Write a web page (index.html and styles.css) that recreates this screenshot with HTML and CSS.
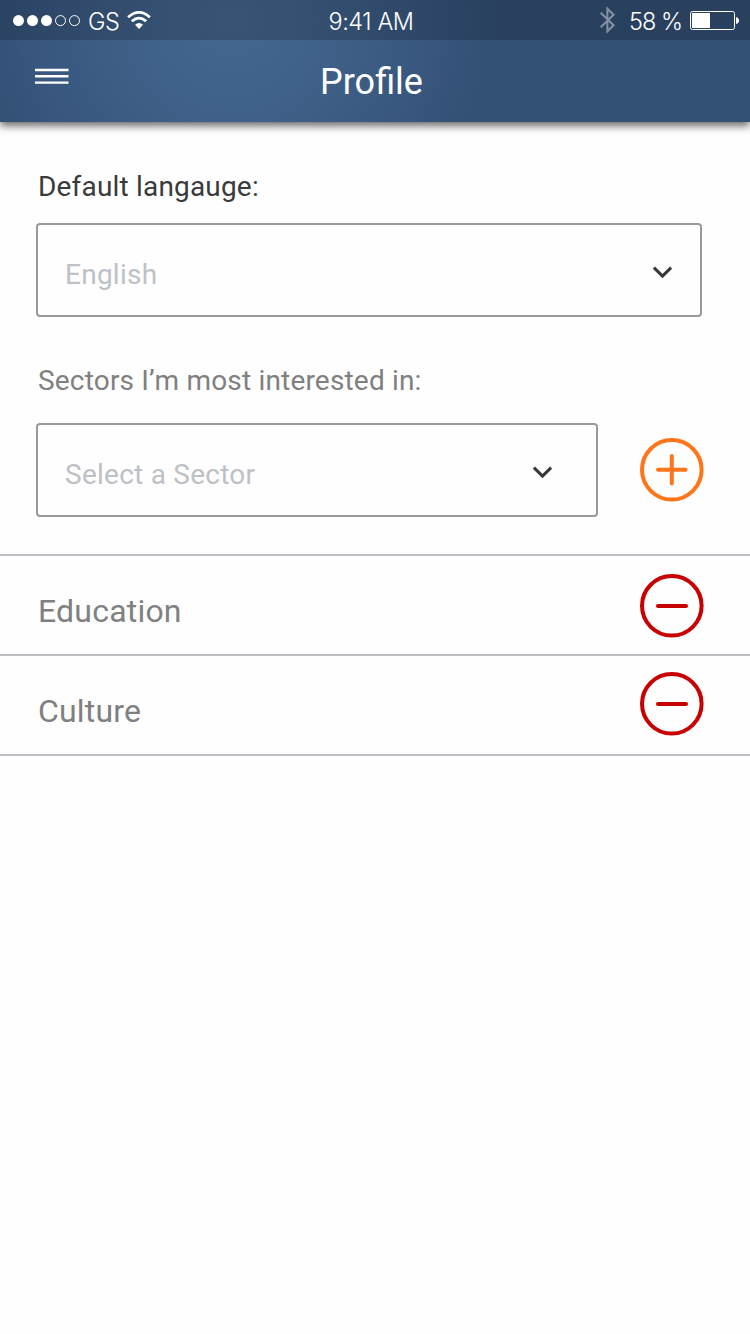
FILE: index.html
```html
<!DOCTYPE html>
<html lang="en">
<head>
<meta charset="utf-8">
<title>Profile</title>
<link rel="stylesheet" href="styles.css">
</head>
<body>
<header class="header">
  <div class="status">
    <div class="status-left">
      <svg class="signal" width="68" height="12" viewBox="0 0 68 12"><g fill="#fff"><circle cx="5.5" cy="5.6" r="5.5"/><circle cx="19.5" cy="5.6" r="5.5"/><circle cx="33.5" cy="5.6" r="5.5"/></g><g fill="none" stroke="#fff"><circle cx="47.5" cy="5.6" r="5"/><circle cx="61.5" cy="5.6" r="5"/></g></svg>
      <span class="carrier">GS</span>
      <svg class="wifi" width="24" height="18" viewBox="0 0 24 18"><g fill="none" stroke="#fff" stroke-width="2.8"><path d="M1.1 6.2Q12-3.4 22.9 6.2"/><path d="M4.8 10.2Q12 4 19.2 10.2"/></g><path d="M8 13.8Q12 10.2 16 13.8L12 18Z" fill="#fff"/></svg>
    </div>
    <span class="time">9:41 AM</span>
    <div class="status-right">
      <svg class="bluetooth" width="15" height="26" viewBox="0 0 15 26"><path d="M.7 5.7L13.6 18.2 7.4 24.3V1.7L13.6 7.8.7 20.3" fill="none" stroke="#8492a7" stroke-width="2"/></svg>
      <span class="percent">58 %</span>
      <svg class="battery" width="49" height="19" viewBox="0 0 49 19"><rect x=".5" y=".5" width="44" height="18" rx="2" fill="none" stroke="#fff"/><path d="M2 2H20V17H2Z" fill="#fff"/><path d="M46 6Q49 7 49 9.5T46 13Z" fill="#fff"/></svg>
    </div>
  </div>
  <div class="navbar">
    <svg class="menu" width="34" height="17" viewBox="0 0 34 17"><path d="M0 2H33.5M0 8.3H33.5M0 14.6H33.5" stroke="#fff" stroke-width="2.4"/></svg>
    <h1 class="title">Profile</h1>
  </div>
</header>
<main>
  <section class="form">
    <div class="label label-dark">Default langauge:</div>
    <div class="select select-language">
      <span class="value">English</span>
      <svg class="chevron" width="20" height="13" viewBox="0 0 20 13"><path d="M.9 1.6L9.5 10.1 18.1 1.6" fill="none" stroke="#38393b" stroke-width="3.1"/></svg>
    </div>
    <div class="label label-sectors">Sectors I’m most interested in:</div>
    <div class="sector-row">
      <div class="select select-sector">
        <span class="value">Select a Sector</span>
        <svg class="chevron" width="20" height="13" viewBox="0 0 20 13"><path d="M.9 1.6L9.5 10.1 18.1 1.6" fill="none" stroke="#38393b" stroke-width="3.1"/></svg>
      </div>
      <svg class="round add" width="64" height="64" viewBox="0 0 64 64"><circle cx="31.8" cy="31.8" r="29.8"/><path d="M18 31.8H45.6M31.8 18V45.6"/></svg>
    </div>
  </section>
  <ul class="sectors">
    <li class="sector"><span class="sector-name">Education</span>
      <svg class="round remove" width="64" height="64" viewBox="0 0 64 64"><circle cx="31.8" cy="31.8" r="29.8"/><path d="M18 32H46"/></svg></li>
    <li class="sector sector-last"><span class="sector-name">Culture</span>
      <svg class="round remove" width="64" height="64" viewBox="0 0 64 64"><circle cx="31.8" cy="31.8" r="29.8"/><path d="M18 32H46"/></svg></li>
  </ul>
</main>
</body>
</html>
```
FILE: styles.css
```css
* { box-sizing: border-box; }
body { margin: 0; width: 750px; min-height: 1334px; background: #fefefe; font-family: Roboto, sans-serif; }
svg { display: block; flex: none; overflow: visible; }
.header {
  height: 122px;
  color: #fff;
  background: radial-gradient(circle 265px at 232px 20px, #456890 0, #3d5d85 50%, #38567e 76%, #325074 100%);
  box-shadow: 0 4px 8px rgba(0, 0, 0, .58);
}
.status {
  display: grid;
  grid-template-columns: 1fr auto 1fr;
  height: 40px;
  padding: 0 11px 0 13px;
  background: rgba(0, 0, 0, .18);
  font: 350 23.5px/40px Inter, sans-serif;
  letter-spacing: -.5px;
}
.status-left, .status-right { display: flex; align-items: flex-start; }
.status-right { justify-content: flex-end; }
.signal { margin-top: 15px; }
.carrier { width: 30px; margin: 2px 0 0 7px; }
.wifi { margin: 11px 0 0 9px; }
.time { margin: 2px 10px 0 0; letter-spacing: -.4px; }
.bluetooth { margin-top: 7px; }
.percent { width: 51px; margin: 2px 10px 0 14px; letter-spacing: -1px; white-space: nowrap; }
.battery { margin-top: 11px; }
.navbar { display: grid; grid-template-columns: 1fr auto 1fr; height: 82px; padding: 0 35px; }
.menu { margin-top: 28px; }
.title { margin: 21px 7px 0 0; font-size: 36px; font-weight: 400; line-height: 42px; }
.form { padding: 49px 36px 0; }
.label { padding-left: 2px; font-size: 28px; line-height: 32px; letter-spacing: .18px; color: #808080; }
.label-dark { color: #3a3a3a; }
.select {
  display: flex;
  justify-content: space-between;
  height: 94px;
  padding: 0 27px;
  border: 2px solid #999;
  border-radius: 4px;
}
.select-language { width: 666px; margin-top: 20px; }
.select-sector { width: 562px; padding-right: 43px; }
.value { margin-top: 34px; font-size: 28px; line-height: 32px; letter-spacing: .25px; color: #bdc1c6; }
.chevron { margin-top: 41px; }
.label-sectors { margin-top: 48px; }
.sector-row { display: flex; gap: 42px; margin-top: 26px; }
.round { fill: none; stroke-width: 4; stroke-linecap: round; }
.add { margin-top: 15px; stroke: #ff751a; }
.remove { stroke: #c80000; }
.sectors { margin: 37px 0 0; padding: 0; list-style: none; border-top: 2px solid #bbbfc3; }
.sector { display: flex; justify-content: space-between; height: 100px; padding: 18px 46px 0 38px; border-bottom: 2px solid #bbbfc3; }
.sector-last { padding-top: 16px; }
.sector-name { margin-top: 18px; font-size: 32px; line-height: 38px; letter-spacing: .2px; color: #808080; }
.sector-last .sector-name { margin-top: 20px; }
```
